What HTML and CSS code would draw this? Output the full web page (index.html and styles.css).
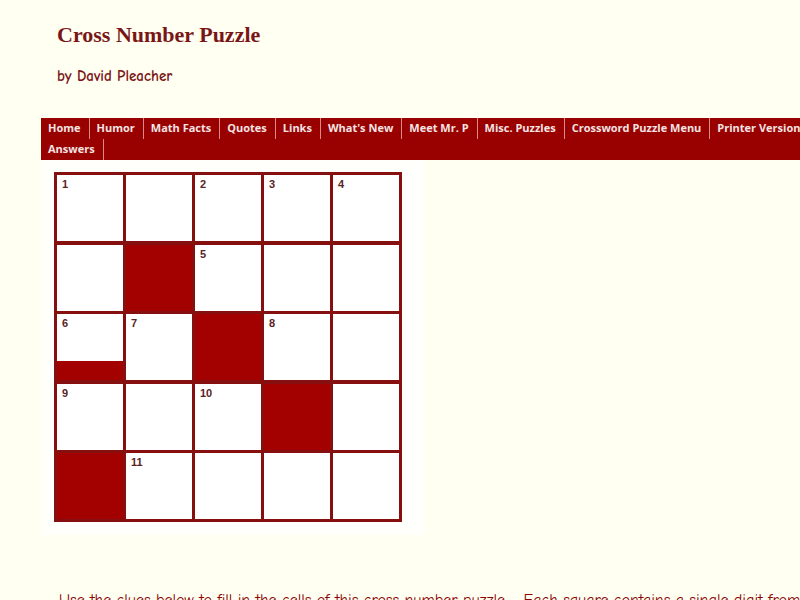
FILE: index.html
```
<!DOCTYPE html>
<html>
<head>
<meta charset="utf-8">
<link rel="stylesheet" href="styles.css">
</head>
<body>
<div class="page">
  <h1 class="title">Cross Number Puzzle</h1>
  <p class="byline">by David Pleacher</p>
  <nav class="nav">
    <a>Home</a><a>Humor</a><a>Math Facts</a><a>Quotes</a><a>Links</a><a>What's New</a><a>Meet Mr. P</a><a>Misc. Puzzles</a><a>Crossword Puzzle Menu</a><a>Printer Version</a><a>Answers</a>
  </nav>
  <div class="board">
    <div class="grid">
      <div class="cell"><span class="num">1</span></div>
      <div class="cell"></div>
      <div class="cell"><span class="num">2</span></div>
      <div class="cell"><span class="num">3</span></div>
      <div class="cell"><span class="num">4</span></div>

      <div class="cell"></div>
      <div class="cell dark"></div>
      <div class="cell"><span class="num">5</span></div>
      <div class="cell"></div>
      <div class="cell"></div>

      <div class="cell short"><span class="num">6</span></div>
      <div class="cell"><span class="num">7</span></div>
      <div class="cell dark"></div>
      <div class="cell"><span class="num">8</span></div>
      <div class="cell"></div>

      <div class="cell"><span class="num">9</span></div>
      <div class="cell"></div>
      <div class="cell"><span class="num">10</span></div>
      <div class="cell dark"></div>
      <div class="cell"></div>

      <div class="cell dark"></div>
      <div class="cell"><span class="num">11</span></div>
      <div class="cell"></div>
      <div class="cell"></div>
      <div class="cell"></div>
    </div>
  </div>
  <p class="intro">Use the clues below to fill in the cells of this cross number puzzle.&nbsp;&nbsp; Each square contains a single digit from 0 to 9.</p>
</div>
</body>
</html>
```
FILE: styles.css
```
html, body {
  margin: 0;
  padding: 0;
  background: #fffff2;
}
.page {
  padding-left: 41px;
  overflow: hidden;
  width: 759px;
}
.title {
  margin: 0;
  padding: 22px 0 0 16px;
  font-family: "Liberation Serif", serif;
  font-size: 22px;
  font-weight: bold;
  color: #7a1616;
  line-height: 26px;
}
.byline {
  margin: 0;
  padding: 18px 0 0 16px;
  font-family: "Comic Sans MS", "Comic Neue", "DejaVu Sans", sans-serif;
  font-size: 15px;
  font-weight: bold;
  color: #7a1616;
  line-height: 20px;
}
.nav {
  margin-top: 32px;
  background: #990000;
  display: flex;
  flex-wrap: wrap;
  width: 800px;
  padding: 0;
}
.nav a {
  display: block;
  font-family: "Open Sans", "DejaVu Sans", sans-serif;
  font-weight: bold;
  font-size: 11px;
  line-height: 20px;
  padding: 0 8px 0 7px;
  color: #f4e4e4;
  border-right: 1px solid #d88a8a;
  white-space: nowrap;
}
.nav a:first-child, .nav a:last-child {
  padding-bottom: 1px;
}
.board {
  background: #fffffb;
  width: 370px;
  padding: 12px 0 13px 13px;
}
.grid {
  display: grid;
  grid-template-columns: repeat(5, 66px);
  grid-auto-rows: 66px;
  gap: 3.5px 3px;
  padding: 3px;
  background: #861010;
  width: max-content;
}
.cell {
  background: #ffffff;
  position: relative;
}
.cell.dark {
  background: #a30000;
}
.cell.short {
  background: linear-gradient(#ffffff 0 47px, #a30000 47px);
}
.num {
  position: absolute;
  left: 5px;
  top: 3px;
  font-family: "Liberation Sans", Arial, sans-serif;
  font-weight: bold;
  font-size: 11px;
  color: #5a2424;
  line-height: 13px;
}
.intro {
  margin: 0;
  padding: 55px 0 0 18px;
  font-family: "Comic Sans MS", "Comic Neue", "DejaVu Sans", sans-serif;
  font-size: 16px;
  color: #8b0000;
  white-space: nowrap;
  line-height: 20px;
}
```
